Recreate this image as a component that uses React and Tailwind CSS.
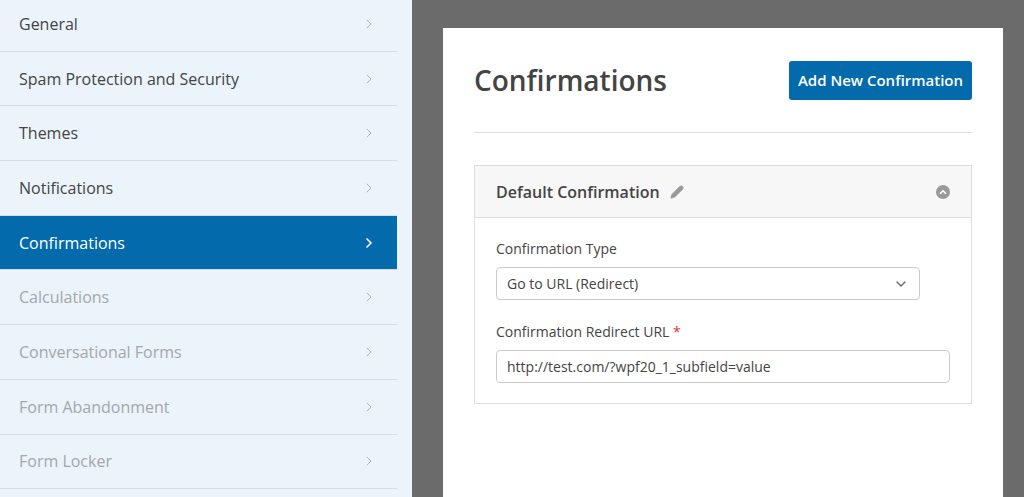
import { ChevronRight, ChevronDown, ChevronUp, Pencil } from 'lucide-react';

const ITEMS = [
  { label: 'General' },
  { label: 'Spam Protection and Security' },
  { label: 'Themes' },
  { label: 'Notifications' },
  { label: 'Confirmations', active: true },
  { label: 'Calculations', muted: true },
  { label: 'Conversational Forms', muted: true },
  { label: 'Form Abandonment', muted: true },
  { label: 'Form Locker', muted: true },
];

export default function App() {
  return (
    <div className="flex h-[497px] w-[1024px] overflow-hidden bg-[#6b6b6b]" style={{ fontFamily: '"Open Sans", sans-serif' }}>
      <div className="flex w-[412px] shrink-0 bg-[#ebf3fb]">
        <div className="-mt-[3px] w-[397px]">
          {ITEMS.map((item) => (
            <div
              key={item.label}
              className={`flex h-[54.7px] items-center justify-between border-b border-[#d5dce4] pl-[19px] pr-[20px] text-[16px] ${
                item.active ? 'bg-[#036aab] text-white' : item.muted ? 'text-[#a3a8ad]' : 'text-[#444]'
              }`}
            >
              <span>{item.label}</span>
              <ChevronRight className={`h-4 w-4 ${item.active ? 'text-white' : 'text-[#b0b4b8]'}`} strokeWidth={item.active ? 2.5 : 1.5} />
            </div>
          ))}
        </div>
      </div>
      <div className="flex-1 pl-[31px] pr-[21px] pt-[28px]">
        <div className="h-full bg-white px-[31px] pt-[31px]">
          <div className="flex items-center justify-between">
            <h1 className="text-[28px] font-semibold text-[#444]">Confirmations</h1>
            <button className="h-[39px] w-[183px] rounded-[3px] bg-[#036aab] text-[15px] font-semibold text-white">
              Add New Confirmation
            </button>
          </div>
          <div className="mt-[31px] border-t border-[#ddd]" />
          <div className="mt-[32px] border border-[#ddd]">
            <div className="flex h-[52px] items-center justify-between border-b border-[#ddd] bg-[#f7f7f7] px-[21px]">
              <div className="flex items-center gap-[10px]">
                <span className="text-[16px] font-semibold text-[#444]">Default Confirmation</span>
                <Pencil className="h-[14px] w-[14px] fill-[#999] text-[#999]" />
              </div>
              <span className="flex h-[14px] w-[14px] items-center justify-center rounded-full bg-[#999]">
                <ChevronUp className="h-[10px] w-[10px] text-white" strokeWidth={4} />
              </span>
            </div>
            <div className="px-[21px] pb-[20px] pt-[20px]">
              <div className="text-[14px] text-[#444]">Confirmation Type</div>
              <div className="mt-[8px] flex h-[33px] w-[424px] items-center justify-between rounded-[4px] border border-[#ccc] px-[10px] text-[14px] text-[#444]">
                <span>Go to URL (Redirect)</span>
                <ChevronDown className="h-4 w-4 text-[#666]" />
              </div>
              <div className="mt-[21px] text-[14px] text-[#444]">
                Confirmation Redirect URL <span className="text-[#d63638]">*</span>
              </div>
              <div className="mt-[8px] flex h-[33px] w-[454px] items-center rounded-[4px] border border-[#ccc] px-[10px] text-[14px] text-[#444]">
                http://test.com/?wpf20_1_subfield=value
              </div>
            </div>
          </div>
        </div>
      </div>
    </div>
  );
}
